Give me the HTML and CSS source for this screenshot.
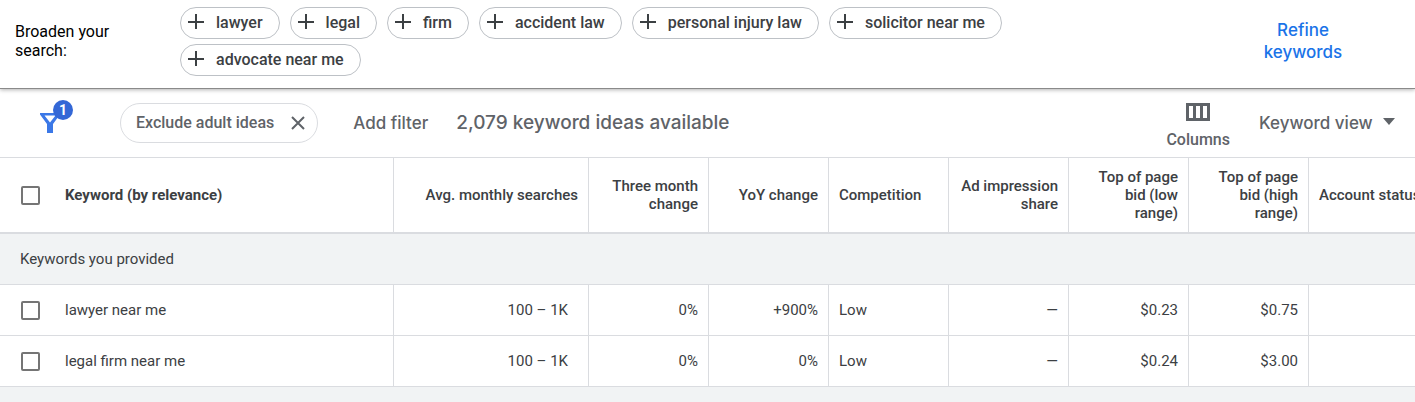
FILE: index.html
```html
<!DOCTYPE html>
<html lang="en">
<head>
  <meta charset="UTF-8">
  <meta name="viewport" content="width=device-width, initial-scale=1.0">
  <title>Keyword ideas</title>
  <link rel="stylesheet" href="styles.css">
</head>
<body>
  <header class="broaden">
    <div class="broaden-label">Broaden your search:</div>
    <div class="chips">
      <button class="chip"><svg class="plus" viewBox="0 0 16 16"><path d="M8 0v15M0 8h16"/></svg>lawyer</button>
      <button class="chip"><svg class="plus" viewBox="0 0 16 16"><path d="M8 0v15M0 8h16"/></svg>legal</button>
      <button class="chip"><svg class="plus" viewBox="0 0 16 16"><path d="M8 0v15M0 8h16"/></svg>firm</button>
      <button class="chip"><svg class="plus" viewBox="0 0 16 16"><path d="M8 0v15M0 8h16"/></svg>accident law</button>
      <button class="chip"><svg class="plus" viewBox="0 0 16 16"><path d="M8 0v15M0 8h16"/></svg>personal injury law</button>
      <button class="chip"><svg class="plus" viewBox="0 0 16 16"><path d="M8 0v15M0 8h16"/></svg>solicitor near me</button>
      <button class="chip"><svg class="plus" viewBox="0 0 16 16"><path d="M8 0v15M0 8h16"/></svg>advocate near me</button>
    </div>
    <button class="refine">Refine keywords</button>
  </header>

  <div class="toolbar">
    <button class="filter-button" aria-label="Filters">
      <svg class="funnel" viewBox="0 0 20 20"><path fill-rule="evenodd" d="M0 0h20v1.500L13 11v9H7v-9L0 1.500zM4.500 2.500L10 9.500l5.500-7z"/></svg>
      <span class="badge">1</span>
    </button>
    <div class="filter-chip">
      <span>Exclude adult ideas</span>
      <button class="remove" aria-label="Remove filter"><svg viewBox="0 0 14 14"><path d="M1 1l12 12M13 1L1 13"/></svg></button>
    </div>
    <button class="add-filter">Add filter</button>
    <div class="count">2,079 keyword ideas available</div>
    <button class="columns">
      <svg viewBox="0 0 24 18"><path fill-rule="evenodd" d="M0 0h24v18H0zM3 3v12h4V3zM10 3v12h4V3zM17 3v12h4V3z"/></svg>
      Columns
    </button>
    <div class="view">
      <select aria-label="View">
        <option>Keyword view</option>
        <option>Grouped view</option>
      </select>
      <svg class="caret" viewBox="0 0 12 7"><path d="M0 0h12L6 7z"/></svg>
    </div>
  </div>

  <main class="table-wrap">
    <table>
      <colgroup>
        <col class="col-keyword">
        <col class="col-searches">
        <col class="col-data">
        <col class="col-data">
        <col class="col-data">
        <col class="col-data">
        <col class="col-data">
        <col class="col-data">
        <col>
      </colgroup>
      <thead>
        <tr>
          <th class="left strong"><label class="check"><input type="checkbox">Keyword (by relevance)</label></th>
          <th>Avg. monthly searches</th>
          <th>Three month change</th>
          <th>YoY change</th>
          <th class="left">Competition</th>
          <th>Ad impression share</th>
          <th>Top of page bid (low range)</th>
          <th>Top of page bid (high range)</th>
          <th class="left nowrap">Account status</th>
        </tr>
      </thead>
      <tbody>
        <tr class="group">
          <td colspan="9">Keywords you provided</td>
        </tr>
        <tr>
          <td class="left"><label class="check"><input type="checkbox">lawyer near me</label></td>
          <td class="searches">100 – 1K</td>
          <td>0%</td>
          <td>+900%</td>
          <td class="left">Low</td>
          <td>—</td>
          <td>$0.23</td>
          <td>$0.75</td>
          <td></td>
        </tr>
        <tr>
          <td class="left"><label class="check"><input type="checkbox">legal firm near me</label></td>
          <td class="searches">100 – 1K</td>
          <td>0%</td>
          <td>0%</td>
          <td class="left">Low</td>
          <td>—</td>
          <td>$0.24</td>
          <td>$3.00</td>
          <td></td>
        </tr>
      </tbody>
    </table>
  </main>
</body>
</html>
```
FILE: styles.css
```css
* {
  box-sizing: border-box;
}

body {
  margin: 0;
  min-height: 100vh;
  background: #f1f3f4;
  font-family: Roboto, Arial, sans-serif;
  font-size: 15px;
  color: #3c4043;
  overflow: hidden;
}

button,
select {
  margin: 0;
  padding: 0;
  border: none;
  background: none;
  font: inherit;
  color: inherit;
  cursor: pointer;
}

/* Suggestions bar */
.broaden {
  position: relative;
  display: flex;
  align-items: center;
  padding: 7px 62px 12px 15px;
  background: #fff;
  border-bottom: 1px solid #8a8a8a;
  box-shadow: 0 1px 4px rgba(0, 0, 0, 0.3);
}

.broaden-label {
  width: 125px;
  margin-right: 40px;
  padding-bottom: 2px;
  font-size: 16px;
  line-height: 19px;
  color: #000;
}

.chips {
  flex: 1;
  display: flex;
  flex-wrap: wrap;
  gap: 5px 10px;
  margin-right: 120px;
}

.chip {
  display: flex;
  align-items: center;
  gap: 12px;
  height: 32px;
  padding: 0 16px 2px 7px;
  border: 1px solid #bdc1c6;
  border-radius: 16px;
  font-size: 16px;
  font-weight: 500;
}

.plus {
  width: 16px;
  height: 16px;
  fill: none;
  stroke: #3c4043;
  stroke-width: 2;
}

.refine {
  width: 100px;
  padding-bottom: 2px;
  font-family: Inter, sans-serif;
  font-size: 17px;
  font-weight: 500;
  line-height: 22px;
  color: #1a73e8;
}

/* Toolbar */
.toolbar {
  display: flex;
  align-items: center;
  height: 69px;
  padding: 0 20px 0 40px;
  background: #fff;
  border-bottom: 1px solid #dadce0;
  color: #5f6368;
}

.filter-button {
  position: relative;
  width: 80px;
  height: 20px;
  text-align: left;
}

.funnel {
  display: block;
  width: 20px;
  height: 20px;
  fill: #3b78e7;
}

.badge {
  position: absolute;
  top: -13px;
  left: 13px;
  width: 20px;
  height: 20px;
  border-radius: 50%;
  background: #3367d6;
  color: #fff;
  font-size: 14px;
  font-weight: 700;
  line-height: 20px;
  text-align: center;
}

.filter-chip {
  display: flex;
  align-items: center;
  gap: 17px;
  height: 40px;
  padding: 0 12px 0 15px;
  border: 1px solid #dadce0;
  border-radius: 20px;
  font-size: 16px;
  font-weight: 500;
}

.filter-chip span {
  padding-bottom: 2px;
}

.remove svg {
  display: block;
  width: 14px;
  height: 14px;
  fill: none;
  stroke: #5f6368;
  stroke-width: 2;
}

.add-filter {
  margin-left: 35px;
  font-family: Inter, sans-serif;
  font-size: 17px;
  font-weight: 500;
}

.count {
  margin-left: 28px;
  padding-bottom: 2px;
  font-family: Inter, sans-serif;
  font-size: 19px;
  font-weight: 500;
}

.columns {
  display: flex;
  flex-direction: column;
  align-items: center;
  gap: 9px;
  margin: 5px 29px 0 auto;
  font-size: 16px;
  font-weight: 500;
}

.columns svg {
  width: 24px;
  height: 18px;
  fill: #5f6368;
}

.view {
  display: flex;
  align-items: center;
  gap: 10px;
  font-family: Inter, sans-serif;
  font-size: 17px;
  font-weight: 500;
}

.view select {
  appearance: none;
}

.caret {
  width: 12px;
  height: 7px;
  margin-bottom: 4px;
  fill: #5f6368;
}

/* Keyword table */
.table-wrap {
  overflow: hidden;
}

table {
  width: 100%;
  min-width: 1440px;
  table-layout: fixed;
  border-spacing: 0;
  background: #fff;
}

.col-keyword {
  width: 394px;
}

.col-searches {
  width: 195px;
}

.col-data {
  width: 120px;
}

th,
td {
  height: 51px;
  padding: 0 10px;
  border-right: 1px solid #dadce0;
  border-bottom: 1px solid #dadce0;
  text-align: right;
}

th {
  height: 76px;
  border-bottom-width: 2px;
  font-weight: 500;
  line-height: 18px;
}

.left {
  text-align: left;
}

.strong {
  font-weight: 700;
}

.nowrap {
  white-space: nowrap;
}

.searches {
  padding-right: 20px;
}

.group td {
  padding-left: 20px;
  background: #f1f3f4;
  text-align: left;
}

.check {
  display: flex;
  align-items: center;
  gap: 25px;
  padding-left: 11px;
}

.check input {
  appearance: none;
  width: 19px;
  height: 19px;
  margin: 0;
  border: 2px solid #757575;
  border-radius: 2px;
}

.check input:checked {
  background: #1a73e8;
}
```
